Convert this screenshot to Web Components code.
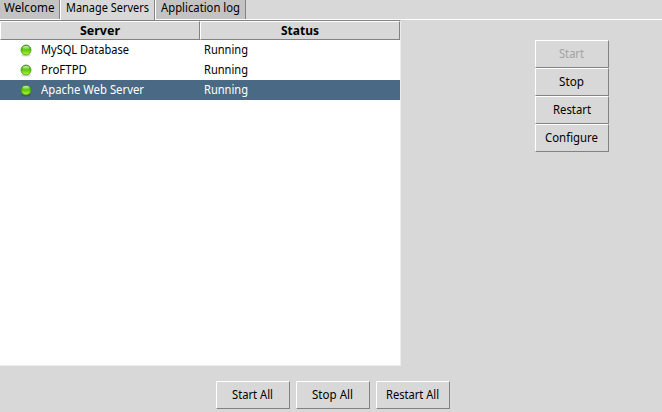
<!DOCTYPE html>
<html lang="en"><head><meta charset="utf-8"><title>Manage Servers</title>
<style>html,body{margin:0;height:100%;overflow:hidden;background:#d8d8d8}</style></head>
<body>
<server-manager></server-manager>
<script>
const define = (name, html, ready) => {
  const t = document.createElement('template');
  t.innerHTML = html;
  customElements.define(name, class extends HTMLElement {
    constructor() { super(); this.attachShadow({mode: 'open'}).append(t.content.cloneNode(true)); }
    connectedCallback() { if (ready) ready(this, this.shadowRoot); }
  });
};

// A label condensed horizontally to the width in its "w" attribute.
define('fit-text', `<style>
:host{display:block;flex:none;height:16px;line-height:16px;white-space:nowrap}
span{display:inline-block;transform-origin:0 50%}
</style><span><slot></slot></span>`, (el, root) => {
  const w = +el.getAttribute('w'), s = root.querySelector('span');
  el.style.width = w + 'px';
  s.style.transform = `scaleX(${w / s.getBoundingClientRect().width})`;
});

define('tab-item', `<style>
:host{box-sizing:border-box;display:block;height:19px;background:#c3c3c3;border-left:1px solid #fff;border-right:1px solid #828282;padding-left:5px}
:host([first]){border-left:0;padding-left:4px}
:host([active]){background:#d8d8d8;height:20px}
</style><slot></slot>`);

define('column-head', `<style>
:host{box-sizing:border-box;display:flex;justify-content:center;width:200px;height:19px;padding-right:1px;padding-top:1px;background:#d8d8d8;border:1px solid;border-color:#fff #828282 #828282 #fff;font-weight:700}
</style><slot></slot>`);

define('status-light', `<style>:host{display:block;width:14px;height:14px}svg{display:block}</style>
<svg width="14" height="14" viewBox="0 0 14 14"><defs>
<linearGradient id="g" x1="0" y1="0" x2="0" y2="1"><stop offset="0" stop-color="#5aa31c"/><stop offset=".45" stop-color="#50c408"/><stop offset="1" stop-color="#b8ff30"/></linearGradient>
<linearGradient id="h" x1="0" y1="0" x2="0" y2="1"><stop offset="0" stop-color="#dff5cc"/><stop offset="1" stop-color="#8ad83e" stop-opacity=".4"/></linearGradient></defs>
<ellipse cx="7" cy="12.2" rx="4.8" ry="1.4" fill="#000" opacity=".14"/>
<circle cx="7" cy="7" r="5" fill="url(#g)" stroke="#418212" stroke-width=".7"/>
<ellipse cx="7" cy="4.9" rx="3.3" ry="1.9" fill="url(#h)"/>
</svg>`);

define('server-row', `<style>
:host{box-sizing:border-box;display:grid;grid-template-columns:19px 22px 163px auto;height:20px;align-items:center;color:#000}
:host([selected]){background:#4a6984;color:#fff}
</style><span></span><status-light></status-light><slot name="name"></slot><slot name="status"></slot>`);

define('push-button', `<style>
:host{box-sizing:border-box;display:flex;justify-content:center;width:74px;height:28px;padding:5px 1px 0 0;border:1px solid;border-color:#fff #828282 #828282 #fff;background:#d8d8d8;color:#000}
:host([disabled]){color:#a3a3a3}
</style><slot></slot>`);

define('server-manager', `<style>
:host{display:flex;flex-direction:column;width:662px;height:412px;background:#d8d8d8;color:#000;font:12px/16px "Noto Sans","Open Sans",sans-serif;cursor:default}
nav{display:flex;height:19px;flex:none}
main{border-top:1px solid #fff;display:flex;height:347px;box-sizing:border-box;flex:none}
nav tab-item[active]{position:relative}
.table{box-sizing:border-box;width:401px;border:1px solid #828282;border-width:1px 0 0;background:#fff;border-right:1px solid #ececec;border-bottom:1px solid #ececec}
.head{display:flex}
.side{margin:20px 0 0 134px}
footer{display:flex;gap:6px;margin:15px 0 0 216px}
</style>
<nav><tab-item first style="width:60px"><fit-text w="50.5">Welcome</fit-text></tab-item><tab-item active style="width:95px"><fit-text w="83">Manage Servers</fit-text></tab-item><tab-item style="width:91px"><fit-text w="79">Application log</fit-text></tab-item></nav>
<main><div class="table"><div class="head"><column-head><fit-text w="40">Server</fit-text></column-head><column-head><fit-text w="38">Status</fit-text></column-head></div>
<server-row><fit-text slot="name" w="88">MySQL Database</fit-text><fit-text slot="status" w="44">Running</fit-text></server-row>
<server-row><fit-text slot="name" w="46">ProFTPD</fit-text><fit-text slot="status" w="44">Running</fit-text></server-row>
<server-row selected style="width:400px"><fit-text slot="name" w="103">Apache Web Server</fit-text><fit-text slot="status" w="44">Running</fit-text></server-row></div>
<div class="side"><push-button disabled><fit-text w="25">Start</fit-text></push-button><push-button><fit-text w="25">Stop</fit-text></push-button><push-button><fit-text w="38">Restart</fit-text></push-button><push-button><fit-text w="53">Configure</fit-text></push-button></div></main>
<footer><push-button><fit-text w="41">Start All</fit-text></push-button><push-button><fit-text w="41">Stop All</fit-text></push-button><push-button><fit-text w="53">Restart All</fit-text></push-button></footer>`);
</script></body></html>
